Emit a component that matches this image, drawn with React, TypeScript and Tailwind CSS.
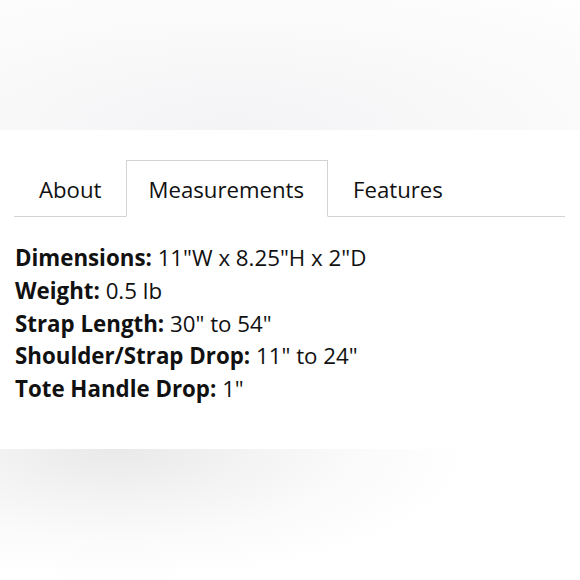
import React from 'react'

const specs = [
  { label: 'Dimensions:', value: '11"W x 8.25"H x 2"D' },
  { label: 'Weight:', value: '0.5 lb' },
  { label: 'Strap Length:', value: '30" to 54"' },
  { label: 'Shoulder/Strap Drop:', value: '11" to 24"' },
  { label: 'Tote Handle Drop:', value: '1"' },
]

const tabs = ['About', 'Measurements', 'Features']

export default function App() {
  const active = 'Measurements'
  return (
    <div
      className="w-[580px] h-[580px] flex flex-col bg-white text-[#111]"
      style={{ fontFamily: '"Open Sans", "Liberation Sans", sans-serif' }}
    >
      {/* top fade */}
      <div className="h-[130px] bg-[radial-gradient(ellipse_90%_130%_at_40%_100%,#f4f4f6_0%,#f9f9fa_55%,#fefefe_100%)]" />

      {/* product tabs */}
      <div className="h-[319px] bg-white pt-[30px]">
        <div className="ml-[14px] mr-[15px] flex border-b border-[#d3d3d3]">
          {tabs.map((t) => (
            <div
              key={t}
              className={
                t === active
                  ? 'pl-[21px] pr-[23px] h-[57px] flex items-center pt-[2px] text-[22.2px] border border-[#d3d3d3] border-b-white bg-white -mb-px'
                  : 'px-6 h-[57px] flex items-center pt-[2px] text-[22.2px] border border-transparent -mb-px'
              }
            >
              {t}
            </div>
          ))}
        </div>

        <div className="mt-[25px] pl-[15px] text-[22.3px] leading-[32.75px]">
          {specs.map((s) => (
            <div key={s.label}>
              <span className="font-bold">{s.label}</span> {s.value}
            </div>
          ))}
        </div>
      </div>

      {/* bottom fade */}
      <div className="flex-1 bg-[radial-gradient(ellipse_62%_100%_at_20%_0%,#e9e9e9_0%,#f4f4f4_40%,#fbfbfb_70%,#ffffff_100%)]" />
    </div>
  )
}
